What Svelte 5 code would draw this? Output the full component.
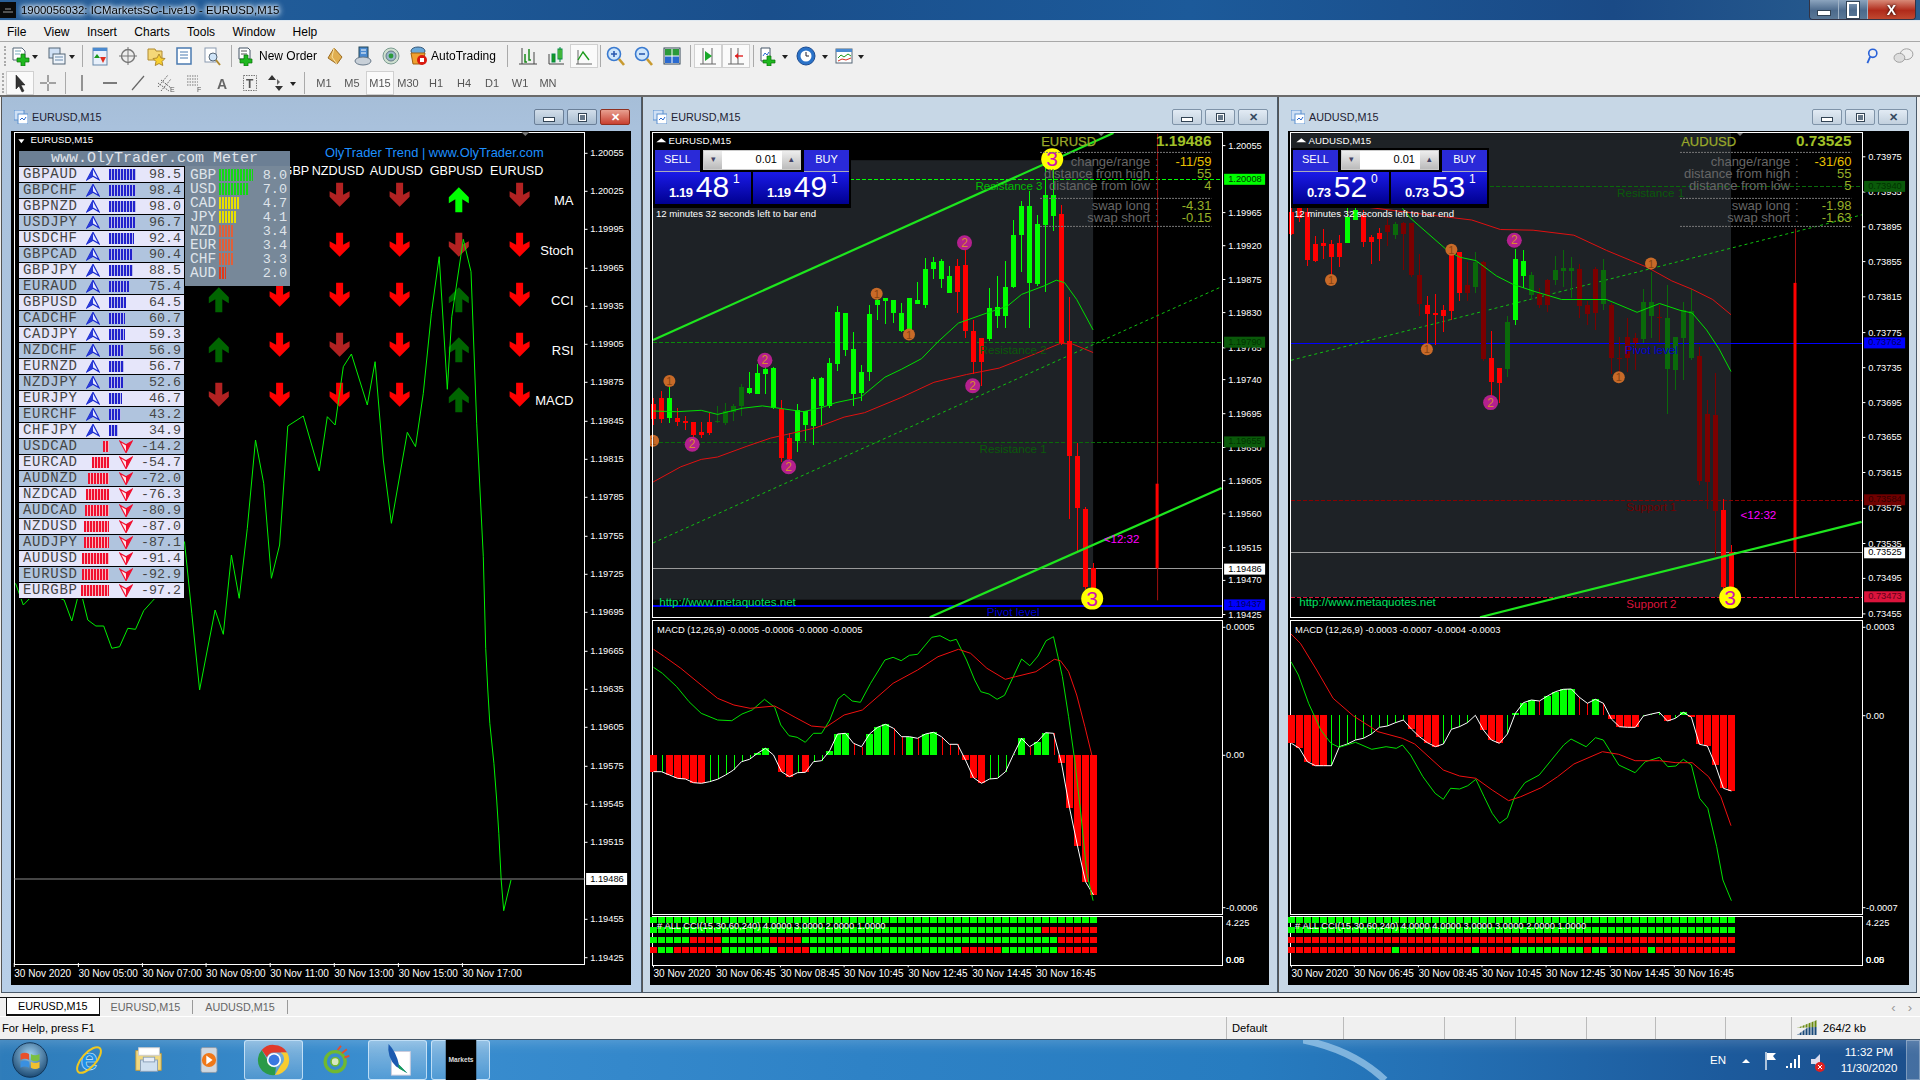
<script>
// candles: [bodyTop, bodyBot, wickTop, wickBot, colour]
const c2 = [[898,942,880,960,'r'],[880,943,860,955,'r'],[880,940,850,955,'g'],[941,952,912,965,'r'],[950,955,935,975,'r'],[953,992,953,1000,'r'],[982,990,953,1000,'r'],[953,985,925,990,'r'],[948,952,905,955,'G'],[920,955,895,960,'G'],[905,922,900,950,'G'],[850,905,840,935,'G'],[852,866,805,870,'g'],[808,870,780,870,'g'],[795,810,770,870,'g'],[793,910,790,915,'g'],[915,1060,888,1070,'r'],[1000,1062,985,1075,'r'],[918,1008,900,1040,'g'],[920,962,920,1008,'g'],[825,965,820,1020,'g'],[822,905,820,965,'g'],[778,905,762,910,'g'],[627,782,610,800,'g'],[630,740,630,757,'g'],[737,870,685,905,'g'],[805,866,785,890,'g'],[632,805,605,830,'g'],[590,607,560,650,'g'],[587,594,585,662,'g'],[590,629,590,660,'g'],[630,682,600,685,'g'],[586,680,586,685,'g'],[590,603,537,603,'g'],[500,605,467,615,'g'],[479,499,465,530,'g'],[476,528,470,555,'g'],[520,570,490,570,'g'],[491,567,470,630,'r'],[488,682,440,703,'r'],[683,775,650,810,'r'],[703,775,703,845,'r'],[616,707,555,712,'g'],[612,640,520,675,'g'],[553,640,475,675,'g'],[400,552,355,555,'g'],[314,398,298,510,'g'],[314,541,270,675,'g'],[367,544,340,550,'g'],[282,370,160,567,'g'],[282,343,160,388,'g'],[338,720,310,725,'r'],[714,1052,582,1240,'r'],[1053,1207,1015,1340,'r'],[1210,1440,1205,1445,'r'],[1385,1445,1370,1450,'r']];
const c3 = [[330,395,320,400,'r'],[320,350,320,360,'r'],[330,472,320,492,'r'],[427,475,402,480,'r'],[423,431,382,470,'r'],[426,463,415,520,'r'],[423,463,400,495,'r'],[345,423,320,423,'g'],[325,355,320,355,'g'],[340,420,325,435,'r'],[405,420,400,485,'r'],[392,412,378,475,'r'],[370,390,350,432,'R'],[368,398,360,410,'G'],[365,395,360,503,'R'],[363,517,363,523,'R'],[518,603,455,640,'R'],[605,633,580,722,'r'],[630,635,575,725,'r'],[621,640,605,685,'r'],[458,624,430,650,'r'],[448,570,448,595,'r'],[547,572,480,595,'R'],[480,552,450,570,'G'],[478,765,475,772,'R'],[764,833,683,880,'r'],[793,836,793,895,'r'],[657,795,640,820,'G'],[470,652,440,665,'g'],[475,520,445,555,'g'],[517,578,510,590,'G'],[575,607,555,615,'R'],[532,605,530,628,'R'],[503,531,460,546,'G'],[498,505,445,553,'G'],[498,505,465,585,'G'],[500,608,485,645,'R'],[605,632,595,665,'R'],[500,630,495,680,'R'],[503,603,470,620,'G'],[605,762,600,810,'R'],[763,767,700,815,'R'],[700,762,645,805,'R'],[703,720,690,798,'R'],[596,708,558,720,'G'],[596,640,510,705,'G'],[642,645,605,715,'R'],[645,797,548,930,'G'],[702,798,702,858,'G'],[622,703,598,828,'G'],[625,762,560,770,'G'],[757,1128,730,1140,'R'],[930,1130,888,1210,'R'],[932,1215,808,1350,'R'],[1213,1440,1180,1445,'r'],[1337,1440,1315,1445,'r']];
const h2 = [[455,'R'],[455,'g'],[465,'R'],[475,'R'],[477,'R'],[488,'R'],[490,'R'],[485,'g'],[478,'g'],[465,'g'],[450,'g'],[425,'g'],[418,'g'],[400,'G'],[385,'G'],[405,'r'],[455,'R'],[470,'R'],[458,'g'],[457,'R'],[425,'g'],[422,'g'],[393,'G'],[342,'G'],[340,'G'],[370,'r'],[380,'r'],[342,'G'],[322,'G'],[313,'G'],[325,'r'],[350,'r'],[350,'G'],[355,'r'],[342,'G'],[337,'G'],[350,'r'],[373,'r'],[373,'r'],[420,'R'],[473,'R'],[490,'R'],[477,'g'],[475,'g'],[455,'g'],[403,'g'],[355,'G'],[380,'r'],[365,'G'],[338,'G'],[340,'r'],[430,'R'],[563,'R'],[678,'R'],[785,'R'],[825,'R']];
const h3 = [[370,'R'],[385,'R'],[425,'R'],[437,'R'],[437,'R'],[437,'g'],[380,'g'],[372,'g'],[360,'g'],[355,'g'],[342,'g'],[322,'g'],[318,'g'],[308,'g'],[300,'g'],[327,'R'],[350,'R'],[368,'R'],[380,'R'],[372,'g'],[328,'g'],[320,'g'],[308,'g'],[286,'g'],[330,'R'],[360,'R'],[370,'R'],[342,'g'],[280,'G'],[248,'G'],[240,'G'],[243,'r'],[228,'G'],[215,'G'],[208,'G'],[207,'G'],[232,'r'],[250,'r'],[238,'G'],[250,'r'],[297,'R'],[320,'R'],[322,'R'],[322,'R'],[288,'g'],[282,'g'],[277,'g'],[303,'R'],[295,'g'],[277,'G'],[292,'R'],[373,'R'],[378,'R'],[435,'R'],[505,'R'],[513,'R']];
const time2 = [[33,'30 Nov 2020'],[187,'30 Nov 06:45'],[344,'30 Nov 08:45'],[500,'30 Nov 10:45'],[657,'30 Nov 12:45'],[814,'30 Nov 14:45'],[971,'30 Nov 16:45']];
const charts = [{
  cx:640,L:650,W:619,base:33,frameL:30,frameR:1427,darkTop:178,darkBot:1478,darkR:1110,sym:'EURUSD',price:'1.19486',
  candles:c2,hist:h2,zero:405,live:[1268,1135,1385,100,1480],
  ma1:[[32,920],[90,922],[150,918],[190,930],[250,912],[300,905],[330,910],[400,922],[445,910],[480,895],[540,880],[600,820],[640,797],[690,765],[730,715],[780,660],[850,630],[900,610],[935,575],[990,550],[1020,533],[1040,540],[1070,590],[1110,680]],
  ma2:[[32,1130],[100,1085],[150,1063],[190,1056],[260,1025],[320,1000],[430,970],[500,938],[550,925],[640,880],[720,835],[800,812],[880,793],[960,755],[1030,720],[1060,722],[1110,747]],
  thick:[[32,710,1160,98],[710,1530,1425,1148]],dotted:[[32,1310,1420,555]],
  hl:[[515,235,'#00ff00',1],[32,717,'#0a8a0a',1],[32,1013,'#0a6a0a',1],[32,1386,'#9a9a9a',0],[32,1496,'#0000ff',0,2]],
  axis:[[135,'1.20055'],[333,'1.19965'],[431,'1.19920'],[531,'1.19875'],[629,'1.19830'],[733,'1.19785'],[827,'1.19740'],[928,'1.19695'],[1028,'1.19650'],[1126,'1.19605'],[1224,'1.19560'],[1324,'1.19515'],[1421,'1.19470'],[1522,'1.19425']],
  boxes:[[233,'1.20008','#00ff00','#003300'],[715,'1.19790','#0a5a0a','#003300'],[1010,'1.19655','#0a5a0a','#003300'],[1386,'1.19486','#ffffff','#000000'],[1492,'1.19437','#0000ff','#000060']],
  circles:[[72,831,'o','1'],[580,573,'o','1'],[659,694,'o','1'],[32,1008,'o','1'],[306,770,'m','2'],[128,1018,'m','2'],[364,1085,'m','2'],[795,422,'m','2'],[815,845,'m','2'],[1010,175,'y','3'],[1108,1475,'y','3']],
  info:['-11/59','55','4','-4.31','-0.15'],
  labels:[[904,255,'Resistance 3','#00c000'],[914,738,'Resistance 2','#0a5a0a'],[914,1033,'Resistance 1','#0a5a0a'],[914,1515,'Pivot level','#0000d0']],
  timer:[1180,1297,'<12:32'],tri:1130,
  g:[[33,142],[55,160],[90,200],[120,245],[150,280],[190,300],[225,302],[250,282],[275,270],[305,238],[330,262],[345,315],[365,347],[385,352],[405,367],[425,340],[445,340],[465,300],[485,237],[500,222],[520,243],[540,247],[565,190],[600,120],[620,112],[640,122],[660,106],[680,103],[715,52],[735,47],[760,63],[775,58],[800,120],[820,180],[835,215],[855,222],[875,238],[893,226],[935,117],[955,137],[975,108],[995,62],[1013,50],[1035,170],[1050,290],[1065,420],[1080,580],[1095,760],[1110,842]],
  r:[[33,88],[60,110],[100,145],[150,195],[190,235],[230,255],[270,265],[330,258],[380,292],[420,318],[455,322],[500,285],[545,270],[620,190],[680,150],[730,110],[780,88],[810,100],[850,145],[895,178],[920,170],[970,155],[1015,118],[1030,122],[1050,155],[1070,225],[1090,320],[1107,405]],
  macd:'MACD (12,26,9) -0.0005 -0.0006 -0.0000 -0.0005',macdAxis:['0.0005','0.00','-0.0006'],
  cci:'# ALL CCI(15,30,60,240) 4.0000 3.0000 2.0000 1.0000',
  rows:[[],[[49,55]],[[5,8],[15,18],[51,55]],[[0,0],[3,8],[16,19],[39,43],[51,55]]],
  time:time2,bid:['1.19','48','1'],ask:['1.19','49','1']
},{
  cx:1280,L:1288,W:621,base:28,frameL:25,frameR:1427,darkTop:98,darkBot:1470,darkR:1105,sym:'AUDUSD',price:'0.73525',
  candles:c3,hist:h3,zero:286,live:[1263,541,1338,380,1470],
  ma1:[[300,320],[320,350],[410,445],[440,465],[480,475],[530,520],[570,545],[620,565],[690,590],[800,590],[875,628],[930,602],[980,622],[1010,630],[1045,680],[1075,735],[1105,803]],
  ma2:[[30,300],[200,315],[300,330],[400,345],[470,355],[540,383],[620,385],[720,400],[800,445],[900,495],[960,535],[1010,560],[1060,590],[1105,635]],
  thick:[[490,1530,1425,1248]],dotted:[[27,770,1425,340]],
  hl:[[515,255,'#0a6a0a',1],[27,720,'#0000ff',0,1],[27,1184,'#8a0000',1],[27,1338,'#9a9a9a',0],[27,1471,'#e0143c',1]],
  axis:[[168,'0.73975'],[272,'0.73935'],[375,'0.73895'],[478,'0.73855'],[582,'0.73815'],[688,'0.73775'],[792,'0.73735'],[895,'0.73695'],[998,'0.73655'],[1102,'0.73615'],[1208,'0.73575'],[1312,'0.73535'],[1415,'0.73495'],[1520,'0.73455']],
  boxes:[[254,'0.73940','#0a5a0a','#003300'],[717,'0.73762','#0000ff','#000060'],[1181,'0.73584','#700000','#300000'],[1338,'0.73525','#ffffff','#000000'],[1468,'0.73473','#dc143c','#600018']],
  circles:[[420,443,'o','1'],[125,532,'o','1'],[360,737,'o','1'],[909,484,'o','1'],[830,820,'o','1'],[574,415,'m','2'],[516,895,'m','2'],[1103,1472,'y','3']],
  info:['-31/60','55','5','-1.98','-1.63'],
  labels:[[908,275,'Resistance 1','#0a5a0a'],[910,740,'Pivot level','#0000d0'],[910,1205,'Support 1','#700000'],[910,1492,'Support 2','#dc143c']],
  timer:[1172,1228,'<12:32'],tri:1127,
  g:[[27,125],[45,165],[70,250],[100,330],[125,370],[145,382],[185,367],[225,388],[260,380],[285,385],[300,375],[320,405],[350,470],[380,520],[400,538],[418,505],[440,507],[460,497],[480,478],[500,530],[520,580],[538,610],[557,593],[575,530],[600,488],[635,465],[665,420],[695,375],[713,357],[750,380],[773,353],[792,360],[830,435],[870,458],[895,425],[930,412],[950,440],[970,438],[988,418],[1008,435],[1028,535],[1048,565],[1070,680],[1085,780],[1106,842]],
  r:[[27,42],[50,70],[90,150],[130,235],[180,288],[240,335],[300,355],[330,372],[400,450],[440,468],[480,475],[520,510],[560,542],[590,530],[640,503],[680,470],[720,432],[790,395],[830,403],[870,422],[930,422],[970,428],[1010,428],[1050,470],[1080,530],[1105,617]],
  macd:'MACD (12,26,9) -0.0003 -0.0007 -0.0004 -0.0003',macdAxis:['0.0003','0.00','-0.0007'],
  cci:'# ALL CCI(15,30,60,240) 4.0000 4.0000 3.0000 3.0000 2.0000 1.0000',
  rows:[[],[],[[0,55]],[[0,12],[14,22],[24,27],[37,37],[40,44],[46,55]]],
  time:time2.map(([x,t])=>[x-5,t]),bid:['0.73','52','0'],ask:['0.73','53','1']
}];
const colours={g:'#00ff00',r:'#ff0000',G:'#0a6a0a',R:'#7a0000'};
const X=(c,z)=>+(c.cx+z/2.45-c.L).toFixed(1);
const Y=z=>+(z/2.958-31).toFixed(1);
const Y1=z=>+(z/3-31).toFixed(1);
const M=z=>+(620+z/3-131).toFixed(1);
const poly=(c,pts,f)=>pts.map(([x,y])=>`${X(c,x)},${f(y)}`).join(' ');
const isRed=(ranges,i)=>ranges.some(([a,b])=>i>=a&&i<=b);
const infoLabels=[[182,'change/range'],[218,'distance from high'],[254,'distance from low'],[313,'swap long'],[348,'swap short']];

// window 1
const c1={cx:0,L:11};
const line1=[[38,1450],[57,1515],[77,1490],[97,1470],[117,1480],[137,1490],[157,1500],[176,1563],[196,1465],[215,1560],[235,1578],[254,1578],[274,1645],[293,1640],[313,1585],[332,1588],[352,1532],[372,1505],[391,1480],[411,1470],[431,1400],[452,1325],[470,1540],[489,1770],[508,1650],[527,1530],[547,1603],[567,1365],[586,1495],[606,1285],[626,1020],[646,1150],[665,1435],[685,1335],[705,978],[743,948],[782,1113],[802,950],[821,975],[841,800],[861,762],[900,915],[919,785],[939,1080],[959,1270],[998,997],[1018,1040],[1037,880],[1057,640],[1076,470],[1096,868],[1107,650],[1135,418],[1154,515],[1168,970],[1184,1370],[1190,1645],[1195,1770],[1200,1870],[1210,1990],[1217,2100],[1222,2200],[1228,2340],[1234,2432],[1252,2340]];
const axis1=[[160,'1.20055'],[274,'1.20025'],[388,'1.19995'],[505,'1.19965'],[619,'1.19935'],[733,'1.19905'],[847,'1.19875'],[964,'1.19845'],[1078,'1.19815'],[1192,'1.19785'],[1309,'1.19755'],[1423,'1.19725'],[1537,'1.19695'],[1654,'1.19665'],[1768,'1.19635'],[1882,'1.19605'],[1999,'1.19575'],[2113,'1.19545'],[2227,'1.19515'],[2458,'1.19455'],[2573,'1.19425']];
const time1=[[35,'30 Nov 2020'],[192,'30 Nov 05:00'],[349,'30 Nov 07:00'],[505,'30 Nov 09:00'],[662,'30 Nov 11:00'],[819,'30 Nov 13:00'],[976,'30 Nov 15:00'],[1133,'30 Nov 17:00']];
const cols=[536,685,832,979,1124,1273];
const rowsY=[248,398,548,698,848];
const sig=[[null,null,'f','f','U','f'],[null,null,'d','d','f','d'],['u','d','d','d','u','d'],['u','d','f','d','u','d'],['f','d','d','d','u','d']];
const rowNames=[[303,'MA'],[454,'Stoch'],[604,'CCI'],[754,'RSI'],[904,'MACD']];
const heads=[[828,'NZDUSD'],[971,'AUDUSD'],[1118,'GBPUSD'],[1266,'EURUSD']];
const arrowPts=(k)=>k==='u'||k==='U'?'0,0 10,10 10,16 3.5,12 3.5,25 -3.5,25 -3.5,12 -10,16 -10,10':'-3.5,0 3.5,0 3.5,12 10,8.5 10,14 0,24 -10,14 -10,8.5 -3.5,12';
const arrowFill={u:'#006400',U:'#00ff00',d:'#ff0000',f:'#b22222'};
const meter=[['GBPAUD',98.5],['GBPCHF',98.4],['GBPNZD',98.0],['USDJPY',96.7],['USDCHF',92.4],['GBPCAD',90.4],['GBPJPY',88.5],['EURAUD',75.4],['GBPUSD',64.5],['CADCHF',60.7],['CADJPY',59.3],['NZDCHF',56.9],['EURNZD',56.7],['NZDJPY',52.6],['EURJPY',46.7],['EURCHF',43.2],['CHFJPY',34.9],['USDCAD',-14.2],['EURCAD',-54.7],['AUDNZD',-72.0],['NZDCAD',-76.3],['AUDCAD',-80.9],['NZDUSD',-87.0],['AUDJPY',-87.1],['AUDUSD',-91.4],['EURUSD',-92.9],['EURGBP',-97.2]];
const ccy=[['GBP','8.0','#12d812',34],['USD','7.0','#12d812',28.5],['CAD','4.7','#e8e000',20],['JPY','4.1','#e8e000',17],['NZD','3.4','#e0603a',14],['EUR','3.4','#e0603a',14],['CHF','3.3','#e0603a',14],['AUD','2.0','#e03a1a',7]];

const icons={
 new:'<path d="M3 2h9l3 3v9H3z" fill="#fff" stroke="#567"/><path d="M5 5h6M5 8h5" stroke="#7ab"/><path d="M11 8h4v4h4v4h-4v4h-4v-4H7v-4h4z" fill="#1fb81f" stroke="#0a700a" stroke-width=".7"/>',
 prof:'<rect x="2" y="2" width="11" height="10" fill="#cfe0f5" stroke="#567"/><rect x="6" y="8" width="12" height="10" fill="#eef4fb" stroke="#567"/><path d="M8 11h8M8 14h8" stroke="#68a"/>',
 mw:'<rect x="3" y="2" width="14" height="17" fill="#e8f0fb" stroke="#68a"/><rect x="3" y="2" width="14" height="3" fill="#4a8ad0"/><path d="M7 8l3 4H4z" fill="#1a9a1a"/><path d="M10 11l3 6 3-6z" fill="#e03020"/>',
 nav:'<circle cx="10" cy="10" r="6.5" fill="#eee" stroke="#777" stroke-width="1.4"/><path d="M10 1v18M1 10h18" stroke="#777"/>',
 fav:'<path d="M2 3h7l1 2h6v9H2z" fill="#f5d878" stroke="#b08a30"/><path d="M13 8l2 4 4 .5-3 3 .8 4-3.8-2-3.8 2 .8-4-3-3 4-.5z" fill="#f8d030" stroke="#b08a30"/>',
 term:'<rect x="3" y="2" width="14" height="16" fill="#fff" stroke="#4a7ab0" stroke-width="1.5"/><path d="M6 6h8M6 9h8M6 12h8" stroke="#4a7ab0"/>',
 tester:'<rect x="3" y="2" width="11" height="14" fill="#fff" stroke="#8a9ab0"/><circle cx="11" cy="11" r="4" fill="#cfe4f8" stroke="#567"/><path d="M14 14l4 5" stroke="#b08a30" stroke-width="2"/>',
 order:'<path d="M3 2h9l2 2v9H3z" fill="#fff" stroke="#456"/><path d="M5 5h6M5 8h6" stroke="#555"/><path d="M8 9h4v4h4v4h-4v3H8v-3H4v-4h4z" fill="#1fb81f" stroke="#0a700a" stroke-width=".7"/>',
 gold:'<path d="M9 2l8 9-5 7-9-6z" fill="#e0ae50" stroke="#9a6a20"/><path d="M9 2l-2 9 5 7" fill="none" stroke="#f8e0a0"/>',
 sig:'<rect x="6" y="1" width="9" height="11" fill="#4a8ad0" stroke="#245"/><path d="M8 4h5M8 7h5" stroke="#fff"/><ellipse cx="10" cy="15" rx="8" ry="4" fill="#c8d0d8" stroke="#678"/>',
 radio:'<circle cx="10" cy="10" r="8" fill="#cfe0d0" stroke="#7a9a90"/><circle cx="10" cy="10" r="5" fill="#9ab8c8" stroke="#678"/><circle cx="10" cy="10" r="2.4" fill="#2a9a3a"/>',
 auto:'<ellipse cx="10" cy="5" rx="7" ry="4" fill="#6aa8d8" stroke="#357"/><path d="M3 7h14l-2 11H5z" fill="#f0a030" stroke="#a06010"/><circle cx="14" cy="14" r="5" fill="#d81a10"/><rect x="12" y="12" width="4" height="4" fill="#fff"/>',
 bars:'<path d="M4 18V2M16 18V6M1 18h18" stroke="#444"/><path d="M7 8v8h2" stroke="#1a8a1a" fill="none" stroke-width="1.5"/><path d="M11 3v11h2" stroke="#1a8a1a" fill="none" stroke-width="1.5"/>',
 candle:'<path d="M3 18h15M3 18V8" stroke="#444"/><rect x="6" y="8" width="3" height="8" fill="#1a9a1a" stroke="#084"/><rect x="12" y="3" width="4" height="10" fill="#7fe030" stroke="#084"/><path d="M14 1v15" stroke="#084"/>',
 line:'<path d="M2 18h16M4 18V4" stroke="#666"/><path d="M4 14l5-8 6 8" fill="none" stroke="#1a9a1a" stroke-width="1.4"/>',
 zin:'<circle cx="8" cy="8" r="6.5" fill="#cfe6fb" stroke="#3a7ad0" stroke-width="1.6"/><path d="M5 8h6M8 5v6" stroke="#2a5ab0" stroke-width="1.6"/><path d="M13 13l5 6" stroke="#c89a30" stroke-width="2.6"/>',
 zout:'<circle cx="8" cy="8" r="6.5" fill="#cfe6fb" stroke="#3a7ad0" stroke-width="1.6"/><path d="M5 8h6" stroke="#2a5ab0" stroke-width="1.6"/><path d="M13 13l5 6" stroke="#c89a30" stroke-width="2.6"/>',
 tile:'<rect x="2" y="2" width="16" height="16" fill="#fff" stroke="#345"/><rect x="3" y="3" width="6.5" height="6.5" fill="#2a9a3a"/><rect x="10.5" y="3" width="6.5" height="6.5" fill="#2a9a3a"/><rect x="3" y="10.5" width="6.5" height="6.5" fill="#2a6ad0"/><rect x="10.5" y="10.5" width="6.5" height="6.5" fill="#2a6ad0"/>',
 scroll:'<path d="M2 18h16M5 18V2M14 18V2" stroke="#666"/><path d="M7 5l7 5-7 5z" fill="#1aa82a"/>',
 shift:'<path d="M2 18h16M5 18V2M12 18V2" stroke="#666"/><path d="M9 10h8" stroke="#e02020" stroke-width="1.4"/><path d="M9 10l3-3v6z" fill="#e02020"/>',
 ind:'<path d="M3 2h9v13H3z" fill="#fff" stroke="#456"/><path d="M5 10l2-3 2 2 2-3" stroke="#2a6ad0" fill="none"/><path d="M9 10h4v4h4v3h-4v3H9v-3H5v-3h4z" fill="#1fb81f" stroke="#0a700a" stroke-width=".7"/>',
 clock:'<circle cx="10" cy="10" r="9" fill="#2a72c8" stroke="#1a4a90"/><circle cx="10" cy="10" r="5.5" fill="#fff"/><path d="M10 6v4h3" stroke="#223" fill="none"/>',
 tmpl:'<rect x="2" y="3" width="16" height="14" fill="#fff" stroke="#567"/><rect x="2" y="3" width="16" height="3" fill="#4a8ad0"/><path d="M4 12l3-3 3 2 4-3 3 2" fill="none" stroke="#1a9a1a"/><path d="M4 15l4-2 4 1 5-2" fill="none" stroke="#d83020"/>',
 arrow:'<path d="M6 2v14l3-3 3 6 2-1-3-6h4z" fill="#333" stroke="#111" stroke-width=".5"/>',
 cross:'<path d="M10 2v7M10 11v7M2 10h7M11 10h7" stroke="#555"/>',
 vl:'<path d="M10 2v16" stroke="#555" stroke-width="1.2"/>',
 hl:'<path d="M3 10h14" stroke="#555" stroke-width="1.5"/>',
 tl:'<path d="M4 17L16 3" stroke="#666" stroke-width="1.2"/>',
 chan:'<path d="M2 14L12 2M5 18L15 6M2 10l11 8M5 7l10 8" stroke="#666" fill="none" stroke-dasharray="1.5 1"/><text x="14" y="19" font-size="7" fill="#555" font-family="Liberation Sans">E</text>',
 fib:'<path d="M3 3h11M3 6h11M3 9h11M3 12h11" stroke="#777" stroke-dasharray="1.5 1"/><text x="13" y="19" font-size="7" fill="#555" font-family="Liberation Sans">F</text>',
 A:'<text x="5" y="16" font-size="14" fill="#666" font-family="Liberation Sans" font-weight="bold">A</text>',
 T:'<rect x="3.5" y="2.5" width="13" height="15" fill="none" stroke="#777" stroke-dasharray="1.5 1"/><text x="6" y="15" font-size="12" fill="#555" font-family="Liberation Sans" font-weight="bold">T</text>',
 arrows:'<path d="M6 2l4 5H2zM13 18l-4-5h8z" fill="#333"/><path d="M11 6l3 3-3 3z" fill="#666"/>'
};
const row1=[['new','w20'],['dd','dd'],['gap','g7'],['prof','w20'],['dd','dd'],['sep','s9'],['mw','w28'],['nav','w28'],['fav','w28'],['term','w28'],['tester','w28'],['sep','s10'],['order','w84','New Order'],['gap','g1'],['gold','w28'],['sig','w28'],['radio','w28'],['gap','g3'],['auto','w92','AutoTrading'],['sep','s14'],['bars','w28'],['candle','w28'],['line','w28 on'],['sep','s4'],['zin','w28'],['zout','w28'],['tile','w28'],['sep','s8'],['scroll','w28 on'],['shift','w28 on'],['sep','s6'],['ind','w24'],['dd','dd'],['gap','g2'],['clock','w28'],['dd','dd'],['gap','g2'],['tmpl','w24'],['dd','dd']];
const row2=[['arrow','w28 on'],['cross','w28'],['sep','s6'],['vl','w28'],['hl','w28'],['tl','w28'],['chan','w28'],['fib','w28'],['A','w28'],['T','w28'],['arrows','w24'],['dd','dd'],['sep','s12']];
const periods=['M1','M5','M15','M30','H1','H4','D1','W1','MN'];
</script>

{#snippet tools(list)}
  {#each list as [name, cls, label]}
    {#if name==='gap'}<span class={cls}></span>
    {:else if name==='sep'}<span class="sep {cls}"></span>
    {:else if name==='dd'}<span class="dd"><i></i></span>
    {:else}
      <span class="tb {cls}">
        <svg viewBox="0 0 20 20" width="20" height="20">{@html icons[name]}</svg>
        {#if label}<b>{label}</b>{/if}
      </span>
    {/if}
  {/each}
{/snippet}

{#snippet winButtons(active)}
  <div class="wbtns" class:active>
    <span class="wb"><i class="mn"></i></span><span class="wb"><i class="mx"></i></span><span class="wb cl">✕</span>
  </div>
{/snippet}

{#snippet pagefold(x,y)}
  <path d="M{x-4} {y} h8 l-4 4z" fill="#777"/>
{/snippet}

{#snippet winIcon()}
  <svg class="wi" viewBox="0 0 14 14" width="14" height="14"><rect x="0" y="0" width="10" height="10" fill="#cfe0f5" stroke="#5a90d0"/><rect x="4" y="4" width="10" height="10" fill="#fff" stroke="#5a90d0"/><path d="M6 10l2-2 2 2 2-3" stroke="#2a6ad0" fill="none"/></svg>
{/snippet}

{#snippet tradePanel(c)}
  <div class="trade">
    <div class="trow">
      <span class="tbtn">SELL</span>
      <span class="lot"><span class="sp">▾</span><span class="val">0.01</span><span class="sp">▴</span></span>
      <span class="tbtn">BUY</span>
    </div>
    <div class="trow prices">
      {#each [c.bid,c.ask] as p}
        <span class="pbox"><small>{p[0]}</small><strong>{p[1]}</strong><sup>{p[2]}</sup></span>
      {/each}
    </div>
    <div class="left">12 minutes 32 seconds left to bar end</div>
  </div>
{/snippet}

{#snippet chart(c)}
  <div class="canvas">
    <svg class="plot" width={c.W} height="854">
      <rect x={X(c,c.frameL)} y={Y(c.darkTop)} width={X(c,c.darkR)-X(c,c.frameL)} height={Y(c.darkBot)-Y(c.darkTop)} fill="#1e2226"/>
      {#each c.hl as [x,y,col,dash,w]}
        <line x1={X(c,x)} x2={X(c,c.frameR)} y1={Y(y)} y2={Y(y)} stroke={col} stroke-width={w||1} stroke-dasharray={dash?'4 2':'none'} shape-rendering="crispEdges"/>
      {/each}
      <line x1={X(c,c.live[0])} x2={X(c,c.live[0])} y1={Y(c.live[3])} y2={Y(c.live[4])} stroke="#a01010"/>
      {#each c.dotted as [a,b,d,e]}
        <line x1={X(c,a)} y1={Y(b)} x2={X(c,d)} y2={Y(e)} stroke="#10c010" stroke-dasharray="3 3"/>
      {/each}
      {#each c.candles as [bt,bb,wt,wb,col],i}
        {@const x=X(c,c.base+19.6*i)}
        <line x1={x} x2={x} y1={Y(wt)} y2={Y(wb)} stroke={colours[col]} shape-rendering="crispEdges"/>
        <rect x={x-2.5} y={Y(bt)} width="5" height={Math.max(1,Y(bb)-Y(bt))} fill={colours[col]} shape-rendering="crispEdges"/>
      {/each}
      <rect x={X(c,c.live[0])-2} y={Y(c.live[1])} width="3" height={Y(c.live[2])-Y(c.live[1])} fill="#ff0000"/>
      <polyline points={poly(c,c.ma1,Y)} fill="none" stroke="#00e000"/>
      <polyline points={poly(c,c.ma2,Y)} fill="none" stroke="#e01010"/>
      {#each c.thick as [a,b,d,e]}
        <line x1={X(c,a)} y1={Y(b)} x2={X(c,d)} y2={Y(e)} stroke="#1ee61e" stroke-width="2.2"/>
      {/each}
      {#each c.circles as [x,y,k,n]}
        <circle cx={X(c,x)} cy={Y(y)} r={k==='o'?6:k==='m'?7.5:11} class="c{k}"/>
        <text x={X(c,x)} y={Y(y)+(k==='y'?7:4)} class="n{k}">{n}</text>
      {/each}
      {#each c.labels as [x,y,t,col]}
        <text x={X(c,x)} y={Y(y)+4} fill={col} class="lvl">{t}</text>
      {/each}
      <text x={X(c,47)} y={Y(1485)+4} class="meta">http://www.metaquotes.net</text>
      <text x={X(c,c.timer[0])} y={Y(c.timer[1])+4} class="lvl timer">{c.timer[2]}</text>
      <text x={X(c,983)} y={Y(122)+5} class="sym">{c.sym}</text>
      <text x={X(c,1400)} y={Y(122)+5} class="pr">{c.price}</text>
      {#each [155,291,374] as y}
        <line x1={X(c,980)} x2={X(c,1400)} y1={Y(y)} y2={Y(y)} stroke="#777" stroke-dasharray="2 1"/>
      {/each}
      {#each infoLabels as [y,t],i}
        <text x={X(c,1250)} y={Y(y)+4} class="il">{t}</text>
        <text x={X(c,1266)} y={Y(y)+4} class="ic">:</text>
        <text x={X(c,1400)} y={Y(y)+4} class="iv" class:first={i===0}>{c.info[i]}</text>
      {/each}
      {@render pagefold(X(c,c.tri),1)}
      <rect x={X(c,c.frameL)} y={Y(97)} width={X(c,c.frameR)-X(c,c.frameL)} height={Y(1532)-Y(97)} class="frame"/>
      <path d="M{X(c,40)} {Y(125)} l5 -4 l5 4z" fill="#fff"/>
      <text x={X(c,70)} y={Y(120)+3} class="cap">{c.sym},M15</text>
      {#each c.axis as [y,t]}
        <line x1={X(c,c.frameR)} x2={X(c,c.frameR)+3} y1={Y(y)} y2={Y(y)} stroke="#fff"/>
        <text x={X(c,1441)} y={Y(y)+3} class="ax">{t}</text>
      {/each}
      {#each c.boxes as [y,t,bg,fg]}
        <rect x={X(c,1431)} y={Y(y)-5} width="41" height="11" fill={bg}/>
        <text x={X(c,1441)} y={Y(y)+3} fill={fg} class="axb">{t}</text>
      {/each}

      <!-- MACD -->
      <rect x={X(c,c.frameL)} y={M(2)} width={X(c,c.frameR)-X(c,c.frameL)} height={M(883)-M(2)} class="frame"/>
      {#each c.hist as [e,k],i}
        {@const x=X(c,c.base+19.6*i)}
        {@const thick=k==='R'||k==='G'}
        <rect x={thick?x-3.5:x} y={Math.min(M(c.zero),M(e))} width={thick?7:1} height={Math.abs(M(e)-M(c.zero))} fill={k==='R'||k==='r'?'#ff0000':'#00ff00'} shape-rendering="crispEdges"/>
      {/each}
      <polyline points={c.hist.map(([e],i)=>`${X(c,c.base+19.6*i)},${M(e)}`).join(' ')} fill="none" stroke="#fff"/>
      <polyline points={poly(c,c.g,M)} fill="none" stroke="#00e000"/>
      <polyline points={poly(c,c.r,M)} fill="none" stroke="#f01010"/>
      <text x={X(c,c.frameL+12)} y={M(30)+3} class="cap2">{c.macd}</text>
      {#each c.macdAxis as t,i}
        {@const y=[22,c.zero+1,863][i]}
        <line x1={X(c,c.frameR)} x2={X(c,c.frameR)+3} y1={M(y)} y2={M(y)} stroke="#fff"/>
        <text x={X(c,1436)} y={M(y)+3} class="ax">{t}</text>
      {/each}

      <!-- CCI -->
      <rect x={X(c,c.frameL)} y={M(890)} width={X(c,c.frameR)-X(c,c.frameL)} height={M(1035)-M(890)} class="frame"/>
      {#each c.rows as ranges,r}
        {#each c.candles as _,i}
          <rect x={X(c,c.base+19.6*i)-3.2} y={M(891+30*r)} width="6.4" height="6" fill={isRed(ranges,i)?'#ff0000':'#00ff00'} shape-rendering="crispEdges"/>
        {/each}
      {/each}
      <text x={X(c,c.frameL+12)} y={M(917)+3} class="cap2">{c.cci}</text>
      <text x={X(c,1436)} y={M(910)+3} class="ax">4.225</text>
      <text x={X(c,1436)} y={M(1020)+3} class="ax">0.00</text>
      <text x={X(c,1436)} y={M(1020)+3} class="ax">0.05</text>

      {#each c.time as [x,t]}
        <line x1={X(c,x)} x2={X(c,x)} y1={M(1035)} y2={M(1042)} stroke="#fff"/>
        <text x={X(c,x)} y={M(1060)+4} class="tm">{t}</text>
      {/each}
    </svg>
    {@render tradePanel(c)}
  </div>
{/snippet}

<div class="app">
  <header class="title">
    <svg class="appicon" viewBox="0 0 16 16" width="16" height="16"><rect width="16" height="16" fill="#0a0a0a"/><path d="M3 10h10M5 7h6" stroke="#999"/></svg>
    <span>1900056032: ICMarketsSC-Live19 - EURUSD,M15</span>
    <div class="caps">
      <span class="cap-b"><i class="mn2"></i></span>
      <span class="cap-b"><i class="mx2"></i></span>
      <span class="cap-b close">X</span>
    </div>
  </header>

  <nav class="menu">
    {#each ['File','View','Insert','Charts','Tools','Window','Help'] as m}<span>{m}</span>{/each}
  </nav>

  <div class="toolbar">
    <i class="grip"></i>
    {@render tools(row1)}
    <span class="tb-right">
      <svg viewBox="0 0 20 20" width="18" height="18"><circle cx="12" cy="7" r="4.5" fill="none" stroke="#2a62d8" stroke-width="1.8"/><path d="M9 11l-3 7" stroke="#2a62d8" stroke-width="2"/></svg>
      <svg viewBox="0 0 24 20" width="22" height="18"><ellipse cx="16" cy="8" rx="7" ry="6" fill="#eee" stroke="#999"/><ellipse cx="8" cy="12" rx="6" ry="5" fill="#ddd" stroke="#999"/></svg>
    </span>
  </div>
  <div class="toolbar second">
    <i class="grip"></i>
    {@render tools(row2)}
    {#each periods as p}<span class="per" class:on={p==='M15'}>{p}</span>{/each}
  </div>

  <main class="mdi">
    <section class="win first active">
      <div class="wtitle">{@render winIcon()}<span>EURUSD,M15</span>{@render winButtons(true)}</div>
      <div class="canvas">
        <svg class="plot" width="619" height="854">
          <rect x={X(c1,35)} y={Y1(97)} width="570" height="832" class="frame"/>
          {@render pagefold(X(c1,1287),1)}
          {#each sig as row,r}
            {#each row as k,i}
              {#if k}
                <polygon transform="translate({X(c1,cols[i])} {Y1(rowsY[r]+(k==='u'||k==='U'?14:0))})" points={arrowPts(k)} fill={arrowFill[k]}/>
              {/if}
            {/each}
          {/each}
          <polyline points={poly(c1,line1,Y1)} fill="none" stroke="#00f000"/>
          <text x={X(c1,1332)} y={Y1(160)+4} class="oly">OlyTrader Trend | www.OlyTrader.com</text>
          {#each heads as [x,t]}<text x={X(c1,x)} y={Y1(213)+4} class="head">{t}</text>{/each}
          <text x={X(c1,725)} y={Y1(213)+4} class="head">GBP</text>
          {#each rowNames as [y,t]}<text x={X(c1,1405)} y={Y1(y)+4} class="rown">{t}</text>{/each}
          <line x1={X(c1,35)} x2={X(c1,1432)} y1="748" y2="748" stroke="#8a8a8a"/>
          <path d="M{X(c1,45)} {Y1(118)} l6 0 l-3 4z" fill="#fff"/>
          <text x={X(c1,75)} y={Y1(120)+3} class="cap">EURUSD,M15</text>
          {#each axis1 as [y,t]}
            <line x1={X(c1,1432)} x2={X(c1,1432)+3} y1={Y1(y)} y2={Y1(y)} stroke="#fff"/>
            <text x={X(c1,1446)} y={Y1(y)+3} class="ax">{t}</text>
          {/each}
          <rect x={X(c1,1436)} y="742" width="41" height="12" fill="#fff"/>
          <text x={X(c1,1446)} y="751" fill="#000" class="axb">1.19486</text>
          {#each time1 as [x,t]}
            <line x1={X(c1,x)} x2={X(c1,x)} y1="832" y2="836" stroke="#fff"/>
            <text x={X(c1,x)} y="846" class="tm">{t}</text>
          {/each}
        </svg>

        <div class="meter">
          <div class="mhead">www.OlyTrader.com Meter</div>
          <div class="mbody">
            <div class="mrows">
              {#each meter as [n,v],i}
                <div class="mrow" class:alt={i%2===1}>
                  <span class="mname">{n}</span>
                  {#if v>0}
                    <svg class="mi up" viewBox="0 0 16 14" width="14" height="13"><path d="M8 0L15 13L8 9L1 13Z" fill="#e8ecff" stroke="#1a2ad0" stroke-width="1.3"/><path d="M8 0L8 9L1 13Z" fill="#2a3ad8"/></svg>
                    <span class="mbar blue" style="width:{(v*0.27).toFixed(1)}px"></span>
                  {:else}
                    <span class="mbar red" style="width:{(-v*0.27+2).toFixed(1)}px"></span>
                    <svg class="mi dn" viewBox="0 0 16 14" width="14" height="13"><path d="M8 14L15 1L8 5L1 1Z" fill="#ffe8ec" stroke="#f01030" stroke-width="1.3"/><path d="M8 14L8 5L15 1Z" fill="#f01030"/></svg>
                  {/if}
                  <span class="mval">{v.toFixed(1)}</span>
                </div>
              {/each}
            </div>
            <div class="ccy">
              {#each ccy as [n,v,col,w]}
                <div class="crow">
                  <span class="cn">{n}</span>
                  <span class="cbar" style="width:{w}px;--c:{col}"></span>
                  <span class="cv">{v}</span>
                </div>
              {/each}
            </div>
          </div>
        </div>
      </div>
    </section>
    <section class="win second-win">
      <div class="wtitle">{@render winIcon()}<span>EURUSD,M15</span>{@render winButtons(false)}</div>
      {@render chart(charts[0])}
    </section>
    <section class="win third-win">
      <div class="wtitle">{@render winIcon()}<span>AUDUSD,M15</span>{@render winButtons(false)}</div>
      {@render chart(charts[1])}
    </section>
  </main>

  <div class="tabs">
    <span class="tab on">EURUSD,M15</span>
    <span class="tab">EURUSD,M15</span>
    <span class="tab">AUDUSD,M15</span>
    <span class="tabnav"><i>‹</i><i>›</i></span>
  </div>

  <div class="status">
    <span class="help">For Help, press F1</span>
    <span class="st a">Default</span>
    <span class="st b"></span><span class="st c"></span><span class="st d"></span><span class="st e"></span><span class="st f"></span><span class="st h"></span>
    <span class="st g">
      <svg viewBox="0 0 24 16" width="24" height="16"><path d="M1 15l20-14v14z" fill="#1a4a7a"/><path d="M1 8l20-8v7z" fill="#6a8a10"/><path d="M0 0v16M3 0v16M6 0v16M9 0v16M12 0v16M15 0v16M18 0v16M21 0v16" stroke="#f0f0f0" stroke-width="1"/></svg>
      264/2 kb
    </span>
  </div>

  <footer class="taskbar">
    <span class="task orb">
      <svg viewBox="0 0 44 44" width="38" height="38"><defs><radialGradient id="orb" cx=".5" cy=".35" r=".7"><stop offset="0" stop-color="#9fd0f0"/><stop offset="1" stop-color="#12406a"/></radialGradient></defs><circle cx="22" cy="22" r="20" fill="url(#orb)" stroke="#0c2c4c"/><path d="M11 15q5-3 10 0v7q-5-3-10 0z" fill="#e8502a"/><path d="M23 15q5 3 10 0v7q-5 3-10 0z" fill="#7ac040"/><path d="M11 24q5-3 10 0v7q-5-3-10 0z" fill="#3a90e0"/><path d="M23 24q5 3 10 0v7q-5 3-10 0z" fill="#f0c030"/></svg>
    </span>
    <span class="task">
      <svg viewBox="0 0 36 36" width="36" height="36"><text x="18" y="28" font-size="31" text-anchor="middle" font-family="Liberation Sans" font-weight="bold" fill="#1f8fe8" stroke="#d8f0ff" stroke-width=".6">e</text><ellipse cx="18" cy="18" rx="16" ry="7" transform="rotate(-48 18 18)" fill="none" stroke="#f0c820" stroke-width="2"/></svg>
    </span>
    <span class="task">
      <svg viewBox="0 0 36 36" width="34" height="34"><path d="M4 8h10l3 3h14v18H4z" fill="#f0d880" stroke="#b89840"/><rect x="7" y="5" width="22" height="8" fill="#fff" stroke="#ccc"/><rect x="9" y="18" width="18" height="12" fill="#cfe0f0" stroke="#8aa0b8"/><rect x="12" y="15" width="12" height="5" fill="#e8eef8" stroke="#8aa0b8"/></svg>
    </span>
    <span class="task">
      <svg viewBox="0 0 36 36" width="32" height="32"><rect x="9" y="4" width="18" height="28" rx="2" fill="#d0d8e0" stroke="#8a98a8"/><circle cx="18" cy="18" r="8" fill="#f07818"/><path d="M15 13l7 5-7 5z" fill="#fff"/></svg>
    </span>
    <span class="task box chrome">
      <svg viewBox="0 0 36 36" width="34" height="34"><path d="M18 2a16 16 0 0 1 13.9 8H18a8 8 0 0 0-7.5 5L5 7.5A16 16 0 0 1 18 2z" fill="#e03a2a"/><path d="M31.9 10A16 16 0 0 1 19 34l6.5-11A8 8 0 0 0 25 10z" fill="#f8cc30"/><path d="M5 7.5l6 10.5a8 8 0 0 0 9 7.8L19 34A16 16 0 0 1 5 7.5z" fill="#2a9a48"/><circle cx="18" cy="18" r="7.5" fill="#fff"/><circle cx="18" cy="18" r="5.8" fill="#3a78e0"/></svg>
    </span>
    <span class="task mid">
      <svg viewBox="0 0 36 36" width="30" height="32"><circle cx="17" cy="20" r="12" fill="none" stroke="#70b830" stroke-width="4"/><circle cx="17" cy="20" r="5" fill="#d8e8c0" stroke="#70b830" stroke-width="2"/><path d="M20 6l4-5M25 10l6-5M28 15l6-2" stroke="#e05030" stroke-width="2.4"/></svg>
    </span>
    <span class="task box feather">
      <svg viewBox="0 0 36 36" width="34" height="36"><rect x="11" y="9" width="20" height="25" fill="#fff" stroke="#ccd"/><path d="M8 1q8 8 11 22l9 9-12-7Q6 15 8 1z" fill="#1c5ab0"/><path d="M18 22l10 10-9-5z" fill="#18a058"/></svg>
    </span>
    <span class="task box mt">
      <svg viewBox="0 0 32 42" width="32" height="40"><rect width="32" height="42" fill="#000"/><text x="16" y="23" font-size="7" text-anchor="middle" fill="#ddd" font-family="Liberation Sans" font-weight="bold">Markets</text></svg>
    </span>
    <svg class="arc" viewBox="0 0 90 40" width="90" height="40"><path d="M0 0q50 10 82 40" fill="none" stroke="#9cc8ea" stroke-width="7" opacity=".75"/></svg>
    <div class="tray">
      <span class="en">EN</span>
      <svg viewBox="0 0 90 24" width="90" height="24"><path d="M0 15l4-4 4 4z" fill="#fff"/><path d="M24 4v18" stroke="#fff" stroke-width="1.3"/><path d="M25 5h9l-3 3 3 4h-9z" fill="#fff"/><path d="M44 18h2v2h-2zM48 15h2v5h-2zM52 11h2v9h-2zM56 7h2v13h-2z" fill="#fff"/><path d="M69 11h4l5-5v15l-5-5h-4z" fill="#dde"/><circle cx="78" cy="19" r="5" fill="#e02020"/><path d="M76 17l4 4M80 17l-4 4" stroke="#fff"/></svg>
      <span class="clock"><span>11:32 PM</span><span>11/30/2020</span></span>
      <span class="showdesk"></span>
    </div>
  </footer>
</div>

<style>
:global(body){margin:0;background:#f0f0f0;overflow:hidden}
.app{width:1920px;height:1080px;display:flex;flex-direction:column;overflow:hidden;font-family:"Liberation Sans",sans-serif;font-size:12px;color:#000;filter:blur(.3px)}
.title{height:21px;flex:none;box-sizing:border-box;display:flex;align-items:center;gap:5px;font-size:11.4px;background:linear-gradient(90deg,#2a5f98 0,#1e5a98 18%,#1a4f8c 40%,#1c5a9a 62%,#1a4a86 84%,#2a5f90 100%);border-bottom:1px solid #dfe8f0;position:relative}
.title>span{text-shadow:0 0 7px #e8f0f8,0 0 7px #e8f0f8,0 0 5px #e8f0f8,0 0 3px #e8f0f8}
.appicon{flex:none}
.caps{margin-left:auto;margin-right:4px;display:flex;height:19px;align-self:flex-start;border:1px solid #334;border-top:0;border-radius:0 0 4px 4px;overflow:hidden}
.cap-b{width:28px;background:linear-gradient(#8ca4be,#4c6a8c 55%,#5a7896);display:flex;align-items:center;justify-content:center;border-right:1px solid #9fb2c6}
.cap-b.close{width:47px;border:0;color:#fff;font-weight:bold;font-size:14px;background:linear-gradient(#d88a78,#b02a1a 55%,#c04830);text-shadow:0 0 3px #000}
.mn2{width:12px;height:4px;background:#fff;margin-top:6px;border:1px solid #345}
.mx2{width:8px;height:12px;border:2px solid #fff;outline:1px solid #345}
.menu{height:21px;flex:none;box-sizing:border-box;display:flex;align-items:center;gap:17.4px;padding:1px 0 0 7px;background:#f0f0f0;border-bottom:1px solid #a8a8a8}
.toolbar{height:27px;flex:none;display:flex;align-items:center;background:#f0f0f0;padding:1px 0 0 4px;position:relative;box-sizing:border-box}
.toolbar.second{padding:2px 0 0 2px;border-bottom:2px solid #6a6a6a;height:28px}
.grip{width:0;height:20px;border-left:2px dotted #aaa;margin-right:4px;flex:none}
.second .grip{margin-right:2px}
.tb{display:flex;align-items:center;justify-content:center;height:24px;flex:none;box-sizing:border-box}
.tb b{font-weight:normal;font-size:12px;white-space:nowrap;margin-left:3px}
.w20{width:20px}.w24{width:24px}.w28{width:28px}
.w84{width:84px;justify-content:flex-start}.w92{width:92px;justify-content:flex-start}
.tb.on{border:1px solid #d0d0d0;background:#fafafa}
.g7{width:7px;flex:none}.g1{width:1px;flex:none}.g2{width:2px;flex:none}.g3{width:3px;flex:none}
.sep{flex:none;height:22px;position:relative}
.sep::after{content:"";position:absolute;left:50%;top:0;height:100%;width:1px;background:#aaa}
.s4{width:4px}.s6{width:6px}.s8{width:8px}.s9{width:9px}.s10{width:10px}.s12{width:12px}.s14{width:14px}
.dd{width:10px;flex:none;display:flex;align-items:center;justify-content:center}
.dd i{border:3px solid transparent;border-top:4px solid #222;margin-top:4px}
.tb-right{margin-left:auto;display:flex;gap:12px;padding-right:6px;align-items:center}
.per{width:28px;text-align:center;font-size:11px;color:#555;height:24px;line-height:24px;box-sizing:border-box;flex:none}
.per.on{border:1px solid #d0d0d0;background:#fafafa;line-height:22px}

.mdi{height:900px;flex:none;display:flex;background:#f0f0f0}
.win{display:flex;flex-direction:column;background:#c7d7e6;border-right:1px solid #4a5a6a;border-left:1px solid #555;border-bottom:1px solid #4a5a6a;height:896px;box-sizing:border-box;flex:none}
.win.first{width:641px;padding:0 10px 7px 9px;margin-left:1px;background:linear-gradient(#a6bed8 0,#a9c1dc 30px,#b8cfe8 100%)}
.second-win{width:636px;padding:0 8px 7px 7px}
.third-win{width:639px;padding:0 7px 7px 9px}
.wtitle{height:34px;flex:none;box-sizing:border-box;padding-top:5px;display:flex;align-items:center;gap:4px;font-size:10.8px;color:#223;position:relative}
.wi{margin-left:3px;flex:none}
.wbtns{margin-left:auto;display:flex;gap:3px;margin-right:1px;align-self:flex-end;margin-bottom:6px}
.wb{width:30px;height:16px;box-sizing:border-box;border:1px solid #7f93a8;border-radius:2px;background:linear-gradient(#e2ebf4,#c2d0de);display:flex;align-items:center;justify-content:center;font-size:11px;color:#34495e;font-weight:bold}
.active .wb{border-color:#6a7f98;background:linear-gradient(#d2deea,#a8bcd0)}
.active .wb.cl{background:linear-gradient(#e8a090,#c84030);color:#fff;border-color:#903020}
.mn{width:10px;height:3px;border:1px solid #345;background:#fff;margin-top:4px}
.mx{width:7px;height:7px;border:1px solid #345;box-shadow:inset 0 0 0 1px #fff;background:#678}
.canvas{position:relative;background:#000;height:854px;flex:none;overflow:hidden}
.plot{display:block}
.plot text{font-family:"Liberation Sans",sans-serif}
.frame{fill:none;stroke:#fff;stroke-width:1;shape-rendering:crispEdges}
.ax{font-size:9.3px;fill:#fff}
.axb{font-size:9.3px}
.tm{font-size:10px;fill:#fff}
.cap{font-size:9.7px;fill:#fff}
.cap2{font-size:9.4px;fill:#fff}
.oly{font-size:12.9px;fill:#1e90ff;text-anchor:end}
.head{font-size:12.6px;fill:#fff;text-anchor:middle}
.rown{font-size:13px;fill:#fff;text-anchor:end}
.co{fill:#c86a28}.cm{fill:#b4208e}.cy{fill:#ffff00}
.no,.nm,.ny{text-anchor:middle}
.no{font-size:11px;fill:#8a4410}
.nm{font-size:12px;fill:#d88a30}
.ny{font-size:21px;fill:#d010b0}
.lvl{font-size:11.6px;text-anchor:middle}
.timer{fill:#ff00ff}
.meta{font-size:11.6px;fill:#00e060}
.sym{font-size:13px;fill:#9aa82a;stroke:#9aa82a;stroke-width:.25}
.pr{font-size:15.3px;font-weight:bold;fill:#a0c028;text-anchor:end}
.il{font-size:13px;fill:#666;text-anchor:end}
.ic{font-size:13px;fill:#666;text-anchor:middle}
.iv{font-size:13px;fill:#98b028;text-anchor:end}
.iv.first{fill:#e8c000}

.trade{position:absolute;left:3px;top:17px;width:198px;background:#000;padding:2px 2px 0;box-sizing:border-box;height:60px}
.trow{display:flex;gap:2px}
.tbtn{width:45px;height:22px;box-sizing:border-box;background:#2a2ad8;color:#fff;font-size:11px;text-align:center;line-height:19px;border-bottom:1px solid #aab}
.lot{flex:1;margin:0 1px;display:flex;background:#fff;border:1px solid #ccc;height:20px;box-sizing:border-box}
.sp{width:18px;background:linear-gradient(#eee,#bbb);font-size:9px;color:#446;text-align:center;line-height:17px;flex:none}
.val{flex:1;text-align:right;padding-right:5px;font-size:11px;line-height:17px}
.pbox{flex:1;height:34px;box-sizing:border-box;background:linear-gradient(#1a1ae8,#000090);color:#fff;display:flex;align-items:baseline;padding-left:14px;border-bottom:2px solid #000;line-height:34px}
.pbox small{font-size:13px;font-weight:bold;letter-spacing:-.4px}
.pbox strong{font-size:30px;font-weight:normal;margin-left:3px;line-height:30px}
.pbox sup{font-size:12px;margin-left:4px;align-self:flex-start;line-height:14px;vertical-align:baseline}
.left{color:#fff;font-size:9.6px;margin-top:1px;white-space:nowrap;padding-left:1px;line-height:14px}

.meter{position:absolute;left:8px;top:20px;width:271px;font-family:"Liberation Mono",monospace}
.mhead{height:15px;background:#6c7f94;color:#e0e4ea;font-size:15px;line-height:15px;text-align:center}
.mbody{display:flex;align-items:flex-start;gap:1px}
.mrows{width:165px;flex:none;padding-top:1px;background:#000}
.mrow{height:15px;margin-bottom:1px;background:#e6e6fa;position:relative;color:#444;font-size:14px;line-height:15px;padding-left:4px;overflow:hidden}
.mrow.alt{background:#b0c4de}
.mname{letter-spacing:.7px}
.mi{position:absolute;top:1px}
.mi.up{left:67px}
.mi.dn{left:100px}
.mbar{position:absolute;top:2px;height:11px}
.mbar.blue{left:90px;background:repeating-linear-gradient(90deg,#2222cc 0 2px,#b8bce8 2px 3px)}
.mbar.red{right:75px;background:repeating-linear-gradient(90deg,#f01030 0 2px,#f8b8c0 2px 3px)}
.mval{position:absolute;right:3px;font-size:13.3px}
.ccy{flex:1;background:#778899;height:120px;padding-top:2px;box-sizing:border-box}
.crow{height:14px;display:flex;align-items:center;color:#dfe4ea;font-size:14.5px;padding-left:5px;position:relative}
.cn{width:29px;flex:none}
.cbar{height:12px;background:repeating-linear-gradient(90deg,var(--c) 0 2px,rgba(119,136,153,.35) 2px 3px)}
.cv{position:absolute;right:3px;font-size:13.5px}

.tabs{height:20px;flex:none;display:flex;align-items:stretch;background:#f0f0f0;border-top:1px solid #111;padding-left:6px;box-sizing:border-box;font-size:10.8px;color:#666;border-bottom:1px solid #fff}
.tab{display:flex;align-items:center;padding:0 12px;border-right:1px solid #999;margin:2px 0}
.tab.on{background:#fff;color:#000;border:1px solid #111;margin:-1px 0 0;padding:0 11px;border-bottom-width:2px}
.tab.on+.tab{padding-left:11px}
.tabnav{margin-left:auto;display:flex;gap:12px;padding-right:8px;align-items:center;color:#999;font-size:13px}
.tabnav i{font-style:normal}

.status{height:23px;flex:none;display:flex;background:#f0f0f0;align-items:center;font-size:11.2px;box-sizing:border-box;border-bottom:1px solid #456}
.help{width:1226px;padding-left:2px;box-sizing:border-box}
.st{height:100%;border-left:1px solid #bbb;display:flex;align-items:center;gap:3px;padding-left:5px;box-sizing:border-box}
.a{width:117px}.b{width:101px}.c{width:71px}.d{width:71px}.e{width:69px}.f{width:70px}.h{width:66px}.g{flex:1;padding-left:4px}

.taskbar{height:40px;flex:none;display:flex;align-items:center;position:relative;background:linear-gradient(90deg,#2e7cba 0,#3a8ed0 20%,#2e82c6 45%,#277cc0 65%,#2470b4 75%,#1c5a9c 90%,#1c4f8c 100%);overflow:hidden;box-shadow:inset 0 12px 14px -10px rgba(255,255,255,.22)}
.task{height:40px;width:60px;display:flex;align-items:center;justify-content:center;flex:none;box-sizing:border-box}
.orb{width:59px}
.box{width:59px;border:1px solid rgba(220,240,255,.75);border-radius:3px;background:linear-gradient(rgba(255,255,255,.4),rgba(255,255,255,.12))}
.chrome{margin-left:5px}
.mid{width:65px}
.mt{margin-left:4px}
.arc{position:absolute;left:1303px;top:0}
.tray{position:absolute;right:0;top:0;height:40px;display:flex;align-items:center;color:#fff}
.en{margin-right:16px;font-size:11.5px}
.clock{display:flex;flex-direction:column;align-items:center;font-size:11.5px;line-height:16px;margin-left:4px;width:66px}
.showdesk{width:14px;height:40px;margin-left:4px;border:1px solid rgba(255,255,255,.3);background:rgba(255,255,255,.18);box-sizing:border-box}
</style>
